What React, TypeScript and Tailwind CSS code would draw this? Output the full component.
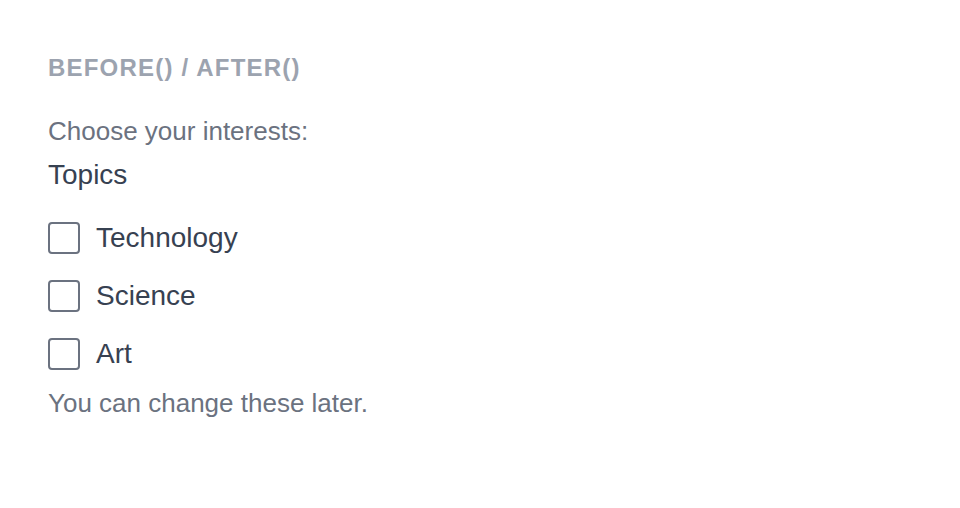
export default function App() {
  const topics = ["Technology", "Science", "Art"];

  return (
    <div className="min-h-screen bg-white p-12 font-['Liberation_Sans',Arial,sans-serif]">
      {/* Heading */}
      <h1 className="text-[24px] leading-10 font-bold uppercase tracking-[0.05em] text-[#9ca3af]">
        before() / after()
      </h1>

      <p className="mt-[25px] text-[26px] leading-9 text-[#6b7280]">
        Choose your interests:
      </p>

      <div role="group" aria-label="Topics">
        <div className="mt-2 text-[28px] leading-9 text-[#374151]">Topics</div>
        <div className="mt-[29px] flex flex-col gap-[26px]">
          {topics.map((t) => (
            <label key={t} className="flex h-8 items-center gap-4 cursor-pointer">
              <input
                type="checkbox"
                className="h-8 w-8 appearance-none rounded-[4px] border-2 border-[#6b7280] bg-white"
              />
              <span className="text-[28px] leading-8 text-[#374151]">{t}</span>
            </label>
          ))}
        </div>
      </div>

      <p className="mt-[15px] text-[26px] leading-9 text-[#6b7280]">
        You can change these later.
      </p>
    </div>
  );
}
